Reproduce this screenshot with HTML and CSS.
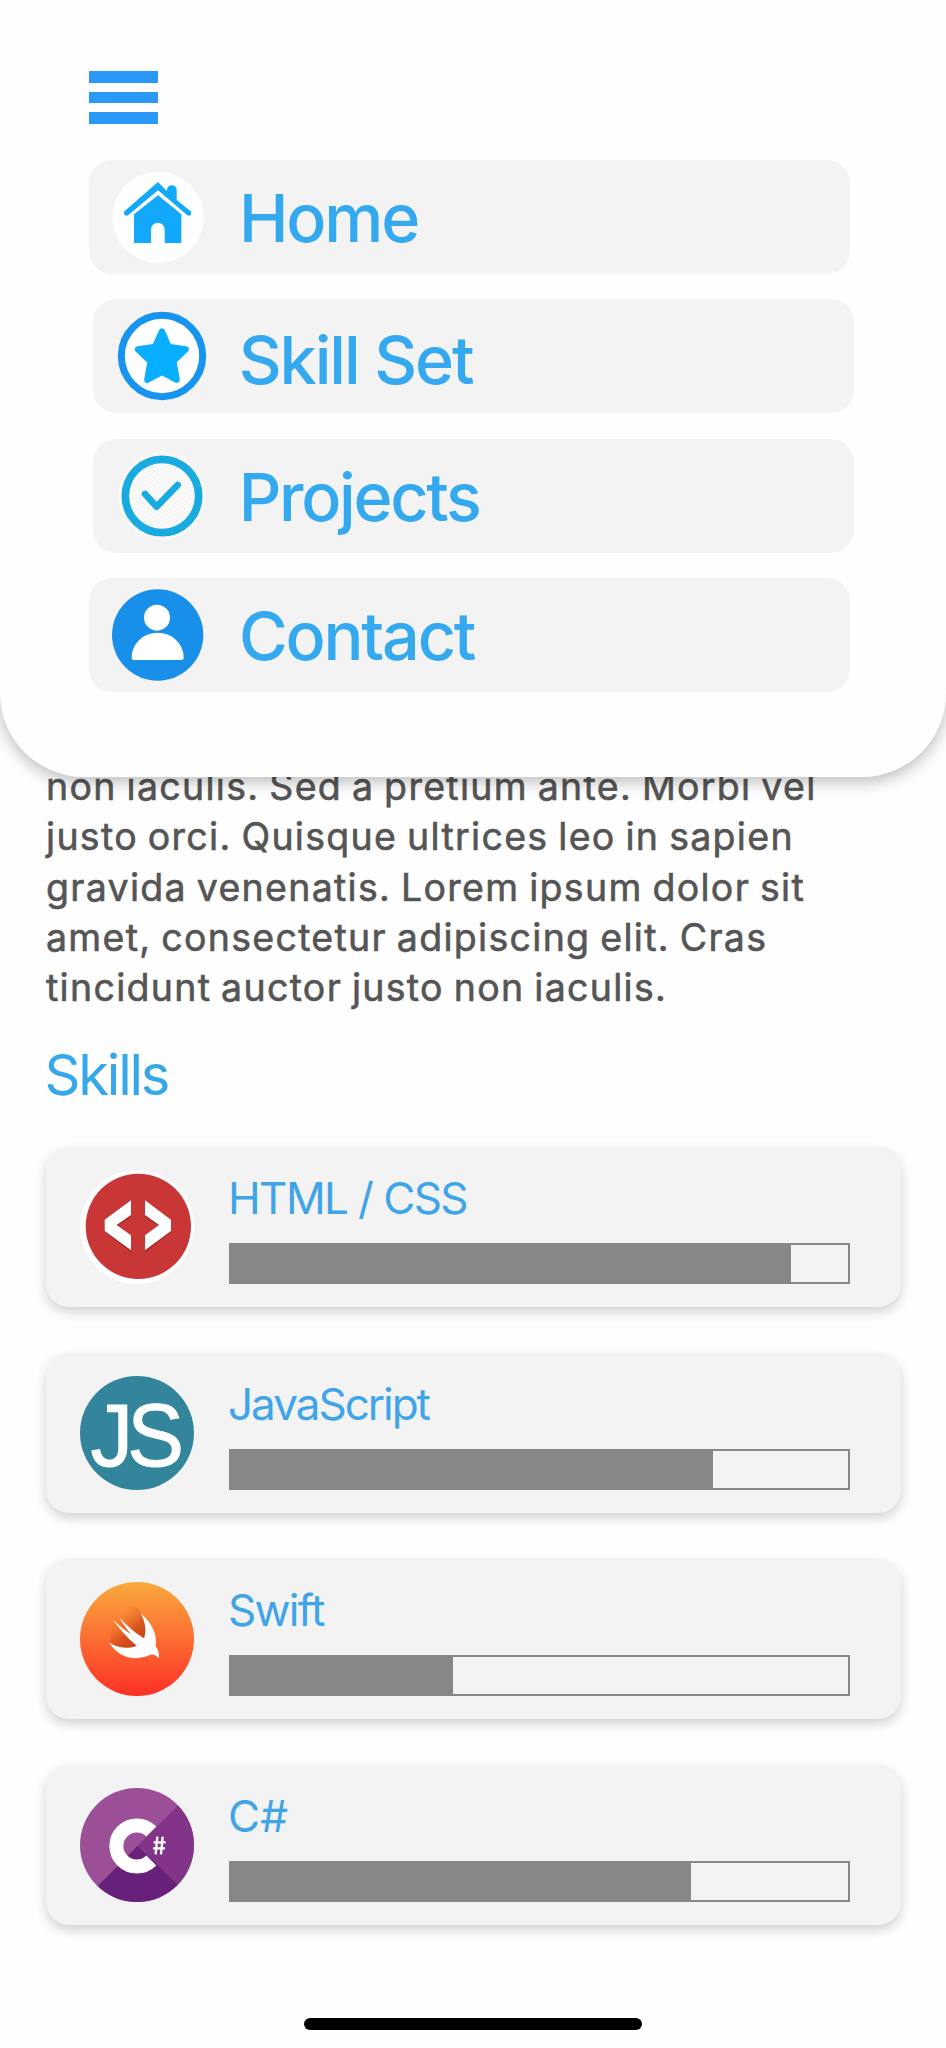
FILE: index.html
```html
<!DOCTYPE html>
<html lang="en">
<head>
<meta charset="utf-8">
<title>Portfolio</title>
<link rel="stylesheet" href="styles.css">
</head>
<body>
<div class="screen">
  <nav class="menu">
    <div class="burger"><span></span><span></span><span></span></div>
    <ul class="menu-list">
      <li class="menu-item">
        <svg class="menu-icon" viewBox="126 363 276 276">
          <circle cx="264" cy="502" r="137" fill="#fdfefe"/>
          <path d="M291 424v-4a14.500 14.500 0 0 1 29 0v30l42 34a8 8 0 0 1-10 12L264 421l-88 73a8 8 0 0 1-12-11L264 396z" fill="#12a9fb"/>
          <path d="M264 436l70 57v86h-50v-40a20.500 20.500 0 0 0-41 0v40h-51v-86z" fill="#12a9fb"/>
        </svg>
        <span class="menu-label home">Home</span>
      </li>
      <li class="menu-item shifted">
        <svg class="menu-icon" viewBox="139 781 276 276">
          <circle cx="277" cy="919" r="122" fill="#fff" stroke="#1794ef" stroke-width="21"/>
          <path d="M277 846L297 892 348 899 311 935 321 990 277 967 233 990 243 935 205 899 256 892Z" fill="#08aeff" stroke="#08aeff" stroke-width="19" stroke-linejoin="round"/>
        </svg>
        <span class="menu-label skill">Skill Set</span>
      </li>
      <li class="menu-item shifted">
        <svg class="menu-icon" viewBox="139 90 276 276">
          <defs>
            <pattern id="checks" width="12" height="12" patternUnits="userSpaceOnUse">
              <path d="M0 0h6v6h-6zM6 6h6v6h-6z" fill="#fcfcfc"/>
            </pattern>
          </defs>
          <circle cx="277" cy="228" r="132" fill="url(#checks)"/>
          <circle cx="277" cy="228" r="110" fill="none" stroke="#19abdf" stroke-width="23"/>
          <path d="M226 222L261 260 324 195" fill="none" stroke="#19abdf" stroke-width="20" stroke-linecap="round" stroke-linejoin="round"/>
        </svg>
        <span class="menu-label projects">Projects</span>
      </li>
      <li class="menu-item">
        <svg class="menu-icon" viewBox="126 508 276 276">
          <circle cx="263" cy="646" r="137" fill="#188fe8"/>
          <circle cx="261" cy="594" r="39" fill="#fff"/>
          <path d="M192 721q-8 0-7-8a77 73 0 0 1 156 0q1 8-7 8z" fill="#fff"/>
        </svg>
        <span class="menu-label contact">Contact</span>
      </li>
    </ul>
  </nav>

  <main class="content">
    <p class="bio">non iaculis. Sed a pretium ante. Morbi vel<br>justo orci. Quisque ultrices leo in sapien<br>gravida venenatis. Lorem ipsum dolor sit<br>amet, consectetur adipiscing elit. Cras<br>tincidunt auctor justo non iaculis.</p>
    <h2 class="heading">Skills</h2>
    <div class="cards">
      <section class="card">
        <svg class="card-icon" viewBox="150 420 342 342">
          <circle cx="321" cy="591" r="171" fill="#fff"/>
          <circle cx="325" cy="589" r="158" fill="#c93636"/>
          <path d="M303 516v44l-41 28 41 28v50l-79-60v-32z M345 516v44l41 28-41 28v50l78-60v-32z" fill="#9b2526"/>
          <path d="M303 511v44l-43 30 43 31v45l-79-58v-34z M345 511v44l42 30-42 31v45l78-58v-34z" fill="#fff"/>
        </svg>
        <div class="card-body">
          <h3 class="card-title html">HTML / CSS</h3>
          <div class="bar"><div class="fill" style="width:90.7%"></div></div>
        </div>
      </section>
      <section class="card">
        <svg class="card-icon" viewBox="150 108 342 342">
          <circle cx="321" cy="279" r="171" fill="#33859b"/>
          <text class="logo-js" x="189 304" y="377" transform="scale(.96 1)">JS</text>
        </svg>
        <div class="card-body">
          <h3 class="card-title js">JavaScript</h3>
          <div class="bar"><div class="fill" style="width:78.1%"></div></div>
        </div>
      </section>
      <section class="card">
        <svg class="card-icon" viewBox="150 125 342 342">
          <defs>
            <linearGradient id="flame" x1="0" y1="0" x2="0" y2="1">
              <stop offset="0" stop-color="#f9aa3d"/>
              <stop offset="1" stop-color="#fd3026"/>
            </linearGradient>
            <linearGradient id="wing" x1="1" y1="1" x2=".3" y2=".1">
              <stop offset="0" stop-color="#b83a12"/>
              <stop offset=".5" stop-color="#cf4c18" stop-opacity=".8"/>
              <stop offset="1" stop-color="#f28430" stop-opacity="0"/>
            </linearGradient>
          </defs>
          <circle cx="321" cy="296" r="171" fill="url(#flame)"/>
          <path d="M240 308C238 260 262 205 310 196Q326 202 334 220Q362 262 346 294L320 318Q276 332 240 308Z" fill="url(#wing)"/>
          <path d="M331 219C358 240 384 278 377 317C386 330 389 343 386 354C377 341 367 340 357 345C313 365 262 348 238 307C264 323 296 327 320 316C293 294 267 264 250 239C268 257 286 271 303 281C289 265 277 247 268 232C291 256 315 277 342 294C351 270 345 241 331 219Z" fill="#fff"/>
        </svg>
        <div class="card-body">
          <h3 class="card-title swift">Swift</h3>
          <div class="bar"><div class="fill" style="width:35.9%"></div></div>
        </div>
      </section>
      <section class="card">
        <svg class="card-icon" viewBox="150 142 342 342">
          <defs><clipPath id="disc"><circle cx="321" cy="313" r="171"/></clipPath></defs>
          <g clip-path="url(#disc)">
            <path d="M150 142h342v342h-342z" fill="#9b4f96"/>
            <path d="M323 315L496 142V488z" fill="#813488"/>
            <path d="M323 315L496 484V490H150z" fill="#68217a"/>
          </g>
          <path d="M364 272.500A61.500 61.500 0 1 0 364 359.500" fill="none" stroke="#fff" stroke-width="42"/>
          <path d="M382 288l-5 53M398 288l-5 53M371 305h36M369 323h36" fill="none" stroke="#fff" stroke-width="7"/>
        </svg>
        <div class="card-body">
          <h3 class="card-title csharp">C#</h3>
          <div class="bar"><div class="fill" style="width:74.5%"></div></div>
        </div>
      </section>
    </div>
  </main>
  <div class="home-indicator"></div>
</div>
</body>
</html>
```
FILE: styles.css
```css
* { box-sizing: border-box; }

body {
  margin: 0;
  background: #fefefe;
  font-family: Inter, "Liberation Sans", sans-serif;
}

.screen {
  position: relative;
  width: 946px;
  height: 2048px;
  overflow: hidden;
  display: flex;
  flex-direction: column;
}

/* Drop-down menu lying over the page */
.menu {
  position: absolute;
  top: 0;
  left: 0;
  z-index: 1;
  width: 946px;
  height: 777px;
  padding: 71px 89px 0;
  background: #fefefe;
  border-radius: 0 0 84px 84px;
  box-shadow: 0 5px 16px rgba(0, 0, 0, .26);
}

.burger {
  display: flex;
  flex-direction: column;
  justify-content: space-between;
  width: 69px;
  height: 52.5px;
}

.burger span {
  height: 11.5px;
  background: #2a98f6;
}

.menu-list {
  display: flex;
  flex-direction: column;
  gap: 25.5px;
  margin: 36.4px 0 0;
  padding: 0;
  list-style: none;
}

.menu-item {
  display: flex;
  align-items: center;
  gap: 35px;
  width: 761px;
  height: 114px;
  padding-left: 23px;
  background: #f3f3f3;
  border-radius: 23px;
}

.menu-item.shifted {
  margin-left: 4.400px;
  gap: 31px;
  padding-left: 22.300px;
}

.menu-icon {
  flex: none;
  width: 92px;
  height: 92px;
}

.menu-label {
  padding-top: 2px;
  color: #35a9ef;
  font-size: 66.5px;
  font-weight: 500;
  line-height: 112px;
  white-space: nowrap;
}

.home { letter-spacing: -2.2px; }
.skill { letter-spacing: -2.1px; padding-top: 7px; }
.projects { letter-spacing: -2.3px; }
.contact { letter-spacing: -2.2px; }

.content { padding: 762px 45px 0 46px; }

.bio {
  margin: 0;
  color: #555;
  font-size: 37.5px;
  font-weight: 400;
  line-height: 50.3px;
  letter-spacing: 1.3px;
  word-spacing: -2px;
  white-space: nowrap;
  -webkit-text-stroke: .6px #555;
}

.heading {
  margin: 27.500px 0 38px -1.500px;
  color: #35a7eb;
  font-size: 56px;
  font-weight: 400;
  line-height: 68px;
  letter-spacing: -2.2px;
}

.cards {
  display: flex;
  flex-direction: column;
  gap: 45.9px;
}

.card {
  display: flex;
  gap: 35px;
  height: 160px;
  padding: 23px 51px 0 34px;
  background: #f3f3f3;
  border-radius: 23px;
  box-shadow: 0 5px 12px rgba(0, 0, 0, .18);
}

.card-icon {
  flex: none;
  width: 114px;
  height: 114px;
}

.card-body { flex: 1; }

.card-title {
  margin: 2px 0 19.400px -1px;
  color: #3fa4e8;
  font-size: 44px;
  font-weight: 400;
  line-height: 52px;
  white-space: nowrap;
}

.html { letter-spacing: -1.6px; }
.js { letter-spacing: -2px; }
.swift { letter-spacing: -1.7px; }
.csharp { letter-spacing: 0; }

.bar {
  height: 41px;
  border: 2px solid #878787;
}

.fill {
  height: 37px;
  background: #878787;
}

.logo-js {
  fill: #fff;
  stroke: #fff;
  stroke-width: 3px;
  font-family: "Liberation Sans", Arial, sans-serif;
  font-size: 266px;
  font-weight: 400;
}

.home-indicator {
  width: 338px;
  height: 12px;
  margin: auto auto 18px;
  background: #000;
  border-radius: 6px;
}
```
